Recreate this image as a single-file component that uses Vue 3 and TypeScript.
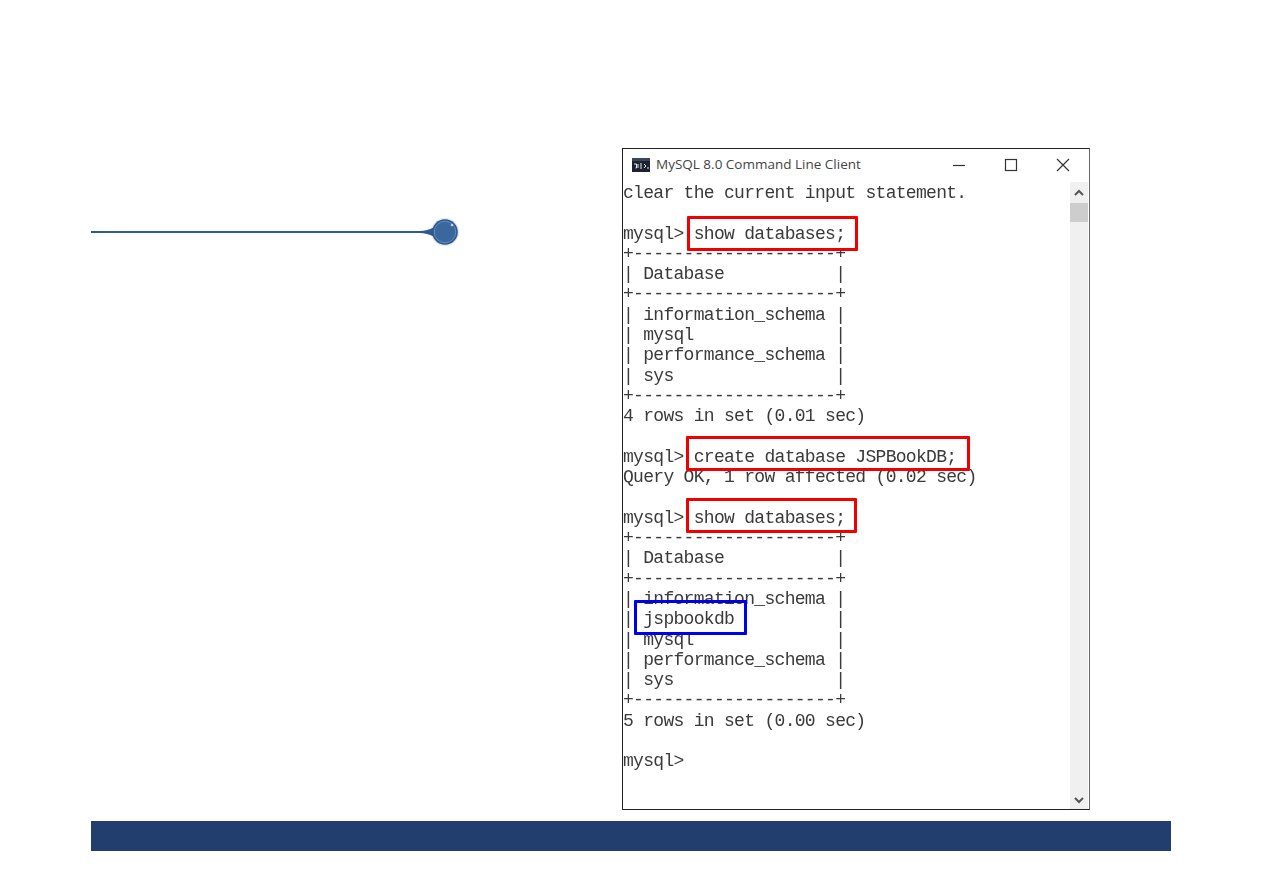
<script setup lang="ts">
const lines: string[] = [
  'clear the current input statement.',
  '',
  'mysql> show databases;',
  '+--------------------+',
  '| Database           |',
  '+--------------------+',
  '| information_schema |',
  '| mysql              |',
  '| performance_schema |',
  '| sys                |',
  '+--------------------+',
  '4 rows in set (0.01 sec)',
  '',
  'mysql> create database JSPBookDB;',
  'Query OK, 1 row affected (0.02 sec)',
  '',
  'mysql> show databases;',
  '+--------------------+',
  '| Database           |',
  '+--------------------+',
  '| information_schema |',
  '| jspbookdb          |',
  '| mysql              |',
  '| performance_schema |',
  '| sys                |',
  '+--------------------+',
  '5 rows in set (0.00 sec)',
  '',
  'mysql>',
]
</script>

<template>
  <div class="page">
    <main class="content">
      <div class="marker">
        <span class="rule"></span>
        <svg class="pin" width="40" height="30" viewBox="0 0 40 30" aria-hidden="true">
          <circle cx="26" cy="15" r="14" fill="#dfe6f0" />
          <path d="M0 14 C6 14 10 12.5 16 10 L16 20 C10 17.5 6 16 0 16 Z" fill="#2f5a8c" />
          <circle cx="26" cy="15" r="12.8" fill="#2f5a8c" />
          <circle cx="26" cy="15" r="10.8" fill="#3a679e" stroke="#6f90b8" stroke-width="0.9" />
          <circle cx="33" cy="8" r="1.3" fill="#c5d3e6" />
        </svg>
      </div>
      <section class="window">
        <header class="titlebar">
          <svg class="app-icon" width="18" height="14" viewBox="0 0 18 14" aria-hidden="true">
            <rect width="18" height="14" fill="#1c2230" />
            <rect y="0" width="18" height="3" fill="#3c4658" />
            <path d="M2 6h2.5v4h-1M6 6v4M8 6h2M8 8h2M8 10h2M12 6l2 2-2 2M15 10h2" stroke="#e8e8e8" stroke-width="1" fill="none" />
          </svg>
          <span class="title">MySQL 8.0 Command Line Client</span>
          <div class="controls">
            <svg width="14" height="14" viewBox="0 0 14 14" aria-hidden="true">
              <path d="M1 7.5h12" stroke="#333" stroke-width="1.2" />
            </svg>
            <svg width="14" height="14" viewBox="0 0 14 14" aria-hidden="true">
              <rect x="1.5" y="1.5" width="11" height="11" fill="none" stroke="#333" stroke-width="1.2" />
            </svg>
            <svg width="14" height="14" viewBox="0 0 14 14" aria-hidden="true">
              <path d="M1 1l12 12M13 1L1 13" stroke="#333" stroke-width="1.2" />
            </svg>
          </div>
        </header>
        <div class="body">
          <pre class="console"><template v-for="(line, i) in lines" :key="i">{{ line }}
</template></pre>
          <aside class="scrollbar">
            <svg class="arrow-up" width="18" height="18" viewBox="0 0 18 18" aria-hidden="true">
              <path d="M5 11l4-4 4 4" fill="none" stroke="#555" stroke-width="2" />
            </svg>
            <div class="thumb"></div>
            <div class="track"></div>
            <svg width="18" height="18" viewBox="0 0 18 18" aria-hidden="true">
              <path d="M5 7l4 4 4-4" fill="none" stroke="#555" stroke-width="2" />
            </svg>
          </aside>
          <span class="box red b1"></span>
          <span class="box red b2"></span>
          <span class="box red b3"></span>
          <span class="box blue b4"></span>
        </div>
      </section>
    </main>
    <footer class="bar"></footer>
  </div>
</template>

<style scoped>
.page {
  width: 1080px;
  height: 893px;
  margin-left: 91px;
  display: flex;
  flex-direction: column;
  background: #fff;
}
.content {
  height: 821px;
  display: flex;
  align-items: flex-start;
  box-sizing: border-box;
  padding-top: 148px;
}
.marker {
  width: 368px;
  margin-top: 69px;
  margin-right: 163px;
  display: flex;
  align-items: center;
  height: 30px;
}
.rule {
  flex: 1;
  height: 2px;
  background: #2f5a8c;
}
.pin {
  display: block;
  flex: none;
}
.window {
  width: 468px;
  height: 662px;
  box-sizing: border-box;
  border: 1px solid #222;
  border-right-color: #666;
  background: #fff;
  display: flex;
  flex-direction: column;
}
.titlebar {
  height: 33px;
  flex: none;
  display: flex;
  align-items: center;
  box-sizing: border-box;
  padding: 0 0 1px 9px;
}
.app-icon {
  flex: none;
}
.title {
  margin: -2px 0 0 6px;
  font: 13.5px "Open Sans", sans-serif;
  color: #444;
  white-space: nowrap;
}
.controls {
  margin-left: auto;
  display: flex;
  gap: 38px;
  padding-right: 19px;
}
.body {
  position: relative;
  flex: 1;
  display: flex;
  min-height: 0;
}
.console {
  flex: 1;
  margin: 0;
  padding: 1px 0 0 0;
  font: 18px/20.3px "Liberation Mono", monospace;
  letter-spacing: -0.7px;
  color: #3a3a3a;
  overflow: hidden;
  filter: blur(0.3px);
}
.scrollbar {
  width: 18px;
  flex: none;
  margin-right: 1px;
  background: #f0f0f0;
  display: flex;
  flex-direction: column;
  align-self: stretch;
}
.scrollbar svg {
  display: block;
  flex: none;
}
.arrow-up {
  margin: 2px 0 1px;
}
.thumb {
  height: 19px;
  flex: none;
  background: #cdcdcd;
}
.track {
  flex: 1;
}
.box {
  position: absolute;
  box-sizing: border-box;
  border-width: 3px;
  border-style: solid;
  border-radius: 1px;
}
.red {
  border-color: #f00000;
}
.blue {
  border-color: #0000f0;
}
.b1 {
  left: 64px;
  top: 34px;
  width: 171px;
  height: 35px;
}
.b2 {
  left: 63px;
  top: 254px;
  width: 284px;
  height: 35px;
}
.b3 {
  left: 63px;
  top: 316px;
  width: 171px;
  height: 35px;
}
.b4 {
  left: 11px;
  top: 418px;
  width: 113px;
  height: 35px;
}
.bar {
  height: 30px;
  flex: none;
  background: #223e6f;
}
</style>

<style>
html,
body {
  margin: 0;
  background: #fff;
  overflow: hidden;
}
</style>
